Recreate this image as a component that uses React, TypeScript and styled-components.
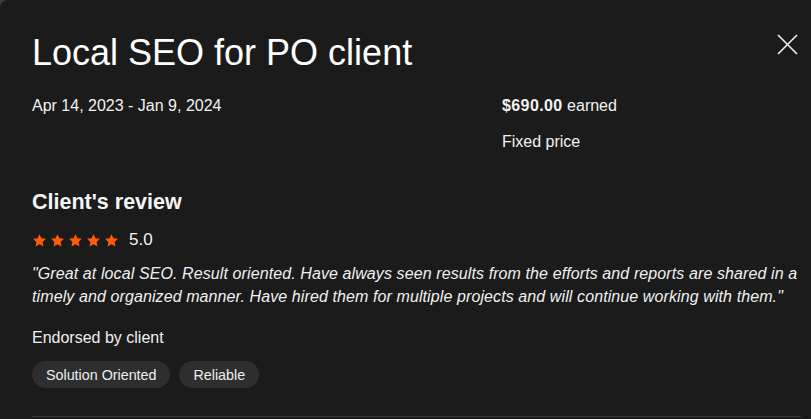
import React from "react";
import styled, { createGlobalStyle } from "styled-components";

const GlobalStyle = createGlobalStyle`
  html, body {
    margin: 0;
    padding: 0;
    background: #3b3b3b;
  }
  body {
    font-family: "Liberation Sans", Arial, sans-serif;
    color: #f2f2f2;
  }
`;

const Star = () => (
  <svg width="15" height="15" viewBox="0 0 24 24">
    <path
      fill="#ff5a0a"
      d="M12 1.8l3.1 6.6 7.2.9-5.3 5 1.4 7.1L12 17.9l-6.4 3.5 1.4-7.1-5.3-5 7.2-.9z"
    />
  </svg>
);

const App = () => {
  return (
    <>
      <GlobalStyle />
      <Modal>
        <CloseButton aria-label="Close">
          <svg width="21" height="21" viewBox="0 0 21 21">
            <path d="M1 1L20 20M20 1L1 20" stroke="#f2f2f2" strokeWidth="1.6" />
          </svg>
        </CloseButton>
        <Title>Local SEO for PO client</Title>
        <InfoGrid>
          <InfoText>Apr 14, 2023 - Jan 9, 2024</InfoText>
          <InfoColumn>
            <InfoText>
              <strong>$690.00</strong> earned
            </InfoText>
            <InfoText>Fixed price</InfoText>
          </InfoColumn>
        </InfoGrid>
        <SectionTitle>Client's review</SectionTitle>
        <RatingRow>
          <Stars>
            {[0, 1, 2, 3, 4].map((i) => (
              <Star key={i} />
            ))}
          </Stars>
          <Score>5.0</Score>
        </RatingRow>
        <Quote>
          "Great at local SEO. Result oriented. Have always seen results from the
          efforts and reports are shared in a timely and organized manner. Have
          hired them for multiple projects and will continue working with them."
        </Quote>
        <Endorsed>Endorsed by client</Endorsed>
        <Chips>
          <Chip>Solution Oriented</Chip>
          <Chip>Reliable</Chip>
        </Chips>
        <Divider />
      </Modal>
    </>
  );
};

export default App;

const Modal = styled.div`
  position: relative;
  box-sizing: border-box;
  width: 811px;
  height: 419px;
  overflow: hidden;
  background: #1b1b1b;
  border-top-left-radius: 8px;
  padding: 30px 10px 0 32px;
`;

const CloseButton = styled.button`
  position: absolute;
  top: 34px;
  right: 13px;
  padding: 0;
  border: 0;
  background: none;
  display: flex;
  cursor: pointer;
`;

const Title = styled.h1`
  margin: 0;
  font-size: 36px;
  line-height: 46px;
  font-weight: 400;
  color: #ffffff;
`;

const InfoGrid = styled.div`
  display: grid;
  grid-template-columns: 470px 1fr;
  margin-top: 19px;
`;

const InfoColumn = styled.div`
  display: flex;
  flex-direction: column;
  gap: 14px;
`;

const InfoText = styled.div`
  font-size: 16px;
  line-height: 22px;
  color: #f2f2f2;

  strong {
    font-weight: 700;
    letter-spacing: 0.4px;
  }
`;

const SectionTitle = styled.h2`
  margin: 35px 0 0;
  font-size: 21.5px;
  line-height: 28px;
  font-weight: 700;
  color: #f5f5f5;
`;

const RatingRow = styled.div`
  display: flex;
  align-items: center;
  gap: 10px;
  margin-top: 14px;
`;

const Stars = styled.div`
  display: flex;
  gap: 3px;
`;

const Score = styled.span`
  font-size: 17px;
  line-height: 20px;
`;

const Quote = styled.p`
  margin: 12px 0 0;
  font-size: 16px;
  line-height: 23px;
  font-style: italic;
  letter-spacing: 0.1px;
  color: #f0f0f0;
`;

const Endorsed = styled.div`
  margin-top: 19px;
  font-size: 16px;
  line-height: 22px;
  color: #f0f0f0;
`;

const Chips = styled.div`
  display: flex;
  gap: 9px;
  margin-top: 12px;
`;

const Chip = styled.span`
  display: inline-flex;
  align-items: center;
  height: 27px;
  padding: 0 14px;
  border-radius: 14px;
  background: #2e2e2e;
  font-size: 14.3px;
  color: #eeeeee;
`;

const Divider = styled.hr`
  margin: 28px 0 0;
  border: 0;
  height: 1px;
  background: #363636;
`;
